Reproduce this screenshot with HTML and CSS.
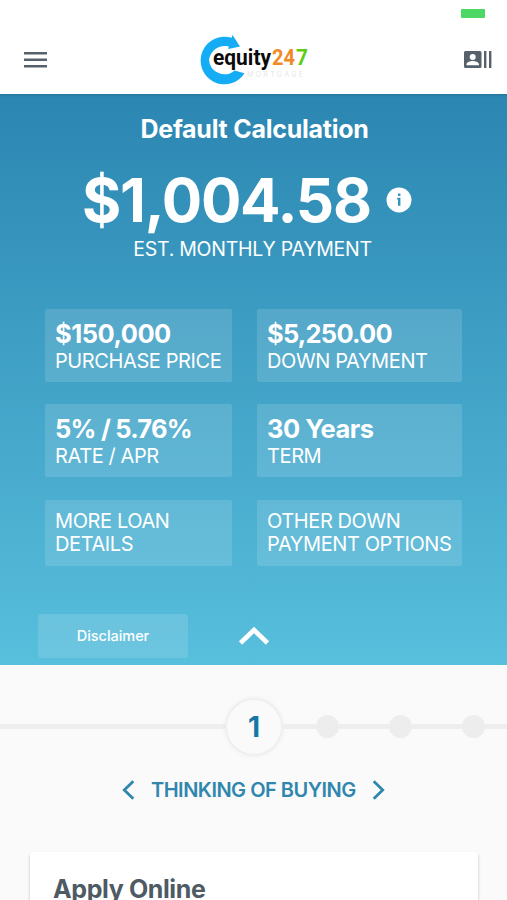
FILE: index.html
```html
<!DOCTYPE html>
<html lang="en">
<head>
    <meta charset="UTF-8">
    <meta name="viewport" content="width=device-width, initial-scale=1.0">
    <title>Equity247 Mortgage</title>
    <link rel="stylesheet" href="styles.css">
</head>
<body>
    <div class="status-bar">
        <span class="battery"></span>
    </div>
    <header class="header">
        <svg class="menu-icon" width="23" height="16" viewBox="0 0 23 16" fill="#56616b">
            <path d="M0 0h23v2.4H0zM0 6.5h23v2.4H0zM0 13h23v2.4H0z"/>
        </svg>
        <svg class="logo" width="110" height="52" viewBox="0 0 110 52">
            <path d="M32.500 1L40 12.500 28.500 15V12.300A16 16 0 0 0 9 26 15.500 15.500 0 0 0 34.500 36.500L44.500 39.300A23.800 23.800 0 1 1 31.500 3.800z" fill="#14adf5"/>
            <text class="logo-name" x="13" y="31" textLength="58" lengthAdjust="spacingAndGlyphs" fill="#0b0b0b">equity</text>
            <text class="logo-name" x="72" y="31" textLength="23" lengthAdjust="spacingAndGlyphs" fill="#f08a24">24</text>
            <text class="logo-name" x="96" y="31" textLength="12" lengthAdjust="spacingAndGlyphs" fill="#5fce12">7</text>
            <text class="logo-sub" x="47" y="43" textLength="56">MORTGAGE</text>
        </svg>
        <svg class="contact-icon" width="28" height="18" viewBox="0 0 28 18" fill="#56616b">
            <path fill-rule="evenodd" d="M1.500 0h14.500a1.500 1.500 0 0 1 1.500 1.500v14a1.500 1.500 0 0 1-1.500 1.500H1.500A1.500 1.500 0 0 1 0 15.500v-14A1.500 1.500 0 0 1 1.500 0zM8.700 3.100a3 3 0 1 0 0 6 3 3 0 0 0 0-6zM2.500 14.300h12.500v-1c0-2.100-4-3.300-6.250-3.300S2.500 11.200 2.500 13.300z"/>
            <path d="M20 0h2.400v17H20zM25 0h2.400v17H25z"/>
        </svg>
    </header>

    <section class="hero">
        <h1 class="title">Default Calculation</h1>
        <div class="amount-row">
            <span class="amount">$1,004.58</span>
            <svg class="info-icon" width="26" height="26" viewBox="0 0 26 26">
                <circle cx="13" cy="13" r="12.500" fill="#fff"/>
                <path d="M12 6.600h2.400v2.400H12zM11.200 10.800h3.200v8H12v-6.400h-.8z" fill="#3494bb"/>
            </svg>
        </div>
        <div class="amount-label">EST. MONTHLY PAYMENT</div>

        <div class="details">
            <div class="box">
                <div class="value">$150,000</div>
                <div class="label">PURCHASE PRICE</div>
            </div>
            <div class="box">
                <div class="value value-tight">$5,250.00</div>
                <div class="label">DOWN PAYMENT</div>
            </div>
            <div class="box">
                <div class="value value-tight">5% / 5.76%</div>
                <div class="label">RATE / APR</div>
            </div>
            <div class="box">
                <div class="value">30 Years</div>
                <div class="label">TERM</div>
            </div>
            <div class="box box-link">MORE LOAN<br>DETAILS</div>
            <div class="box box-link">OTHER DOWN<br>PAYMENT OPTIONS</div>
        </div>

        <div class="hero-footer">
            <button class="disclaimer">Disclaimer</button>
            <svg class="collapse-icon" width="32" height="20" viewBox="0 0 32 20">
                <path d="M2.500 17L16 4l13.500 13" fill="none" stroke="#fff" stroke-width="4.600"/>
            </svg>
        </div>
    </section>

    <div class="stepper">
        <span class="line line-left"></span>
        <span class="step-current">1</span>
        <span class="line line-first"></span>
        <span class="dot"></span>
        <span class="line line-mid"></span>
        <span class="dot"></span>
        <span class="line line-mid"></span>
        <span class="dot"></span>
        <span class="line"></span>
    </div>

    <nav class="stage">
        <svg width="13" height="20" viewBox="0 0 13 20">
            <path d="M11.300 1.300L2.300 10l9 8.700" fill="none" stroke="#2f87ae" stroke-width="2.800"/>
        </svg>
        <span class="stage-name">THINKING OF BUYING</span>
        <svg width="13" height="20" viewBox="0 0 13 20">
            <path d="M1.700 1.300l9 8.700-9 8.700" fill="none" stroke="#2f87ae" stroke-width="2.800"/>
        </svg>
    </nav>

    <div class="card">
        <h2 class="card-title">Apply Online</h2>
    </div>
</body>
</html>
```
FILE: styles.css
```css
* {
    box-sizing: border-box;
}
body {
    margin: 0;
    height: 900px;
    overflow: hidden;
    background-color: #fafafa;
    font-family: Inter, "Liberation Sans", sans-serif;
    color: #fff;
}
.status-bar {
    height: 26px;
    padding: 9px 22px 0 0;
    display: flex;
    justify-content: flex-end;
    background-color: #fff;
}
.battery {
    width: 24px;
    height: 8.5px;
    border-radius: 1px;
    background-color: #4bd864;
}
.header {
    height: 68px;
    display: flex;
    align-items: center;
    justify-content: space-between;
    padding: 0 15px 0 24px;
    background-color: #fff;
}
.logo {
    margin-right: 1px;
}
.logo-name {
    font-family: Roboto, sans-serif;
    font-weight: 700;
    font-size: 22px;
}
.logo-sub {
    font-family: Inter, sans-serif;
    font-size: 7px;
    fill: #e6e6e6;
}

/* Payment summary */
.hero {
    height: 571px;
    padding-top: 20px;
    background: linear-gradient(#2b86b1, #58bfdd);
    box-shadow: inset 0 5px 3px -4px rgba(0, 0, 0, 0.15);
}
.title {
    margin: 0;
    padding-left: 2px;
    height: 30px;
    line-height: 30px;
    font-size: 25px;
    font-weight: 650;
    letter-spacing: -0.25px;
    text-align: center;
}
.amount-row {
    display: flex;
    align-items: center;
    margin-top: 26px;
    height: 60px;
    padding-left: 82px;
}
.amount {
    width: 304px;
    font-size: 60px;
    line-height: 60px;
    font-weight: 700;
    letter-spacing: -1.25px;
    white-space: nowrap;
}
.amount-label {
    margin-top: 7px;
    padding-right: 2px;
    line-height: 24px;
    font-size: 19.5px;
    text-align: center;
    letter-spacing: -0.25px;
}
.details {
    display: grid;
    grid-template-columns: 187px 205px;
    grid-template-rows: 73px 73px 66px;
    gap: 22.5px 25px;
    margin: 47.5px 0 0 45px;
}
.box {
    padding: 11px 0 0 10px;
    border-radius: 2px;
    background-color: rgba(255, 255, 255, 0.13);
    white-space: nowrap;
}
.value {
    font-size: 25.5px;
    line-height: 28px;
    font-weight: 650;
    letter-spacing: -0.5px;
}
.value-tight {
    letter-spacing: -0.78px;
}
.label {
    margin-top: 1px;
    font-size: 20px;
    line-height: 24px;
    letter-spacing: -0.4px;
}
.box-link {
    padding-top: 10px;
    font-size: 20px;
    line-height: 23.5px;
    letter-spacing: -0.4px;
}
.hero-footer {
    display: flex;
    align-items: center;
    margin: 48.5px 0 0 38px;
}
.disclaimer {
    width: 150px;
    height: 44px;
    padding: 0 0 1px;
    border: none;
    border-radius: 3px;
    background-color: rgba(255, 255, 255, 0.13);
    color: #fff;
    font-family: inherit;
    font-size: 14.5px;
    font-weight: 500;
    letter-spacing: -0.05px;
}
.collapse-icon {
    margin-left: 50px;
}

/* Progress steps */
.stepper {
    display: flex;
    align-items: center;
    height: 60px;
    margin-top: 31.5px;
}
.line {
    flex: 1;
    height: 5px;
    background-color: #eee;
}
.line-left {
    flex: none;
    width: 225px;
}
.line-first {
    flex: none;
    width: 33px;
}
.line-mid {
    flex: none;
    width: 50px;
}
.step-current {
    display: flex;
    align-items: center;
    justify-content: center;
    width: 58px;
    height: 58px;
    border: 2px solid #efefef;
    border-radius: 50%;
    box-shadow: 0 0 5px rgba(0, 0, 0, 0.05);
    color: #1677a6;
    font-size: 28px;
    font-weight: 700;
}
.dot {
    width: 23px;
    height: 23px;
    border-radius: 50%;
    background-color: #ededed;
}
.stage {
    display: flex;
    align-items: center;
    justify-content: center;
    height: 30px;
    margin-top: 18.5px;
}
.stage-name {
    width: 205px;
    margin: 0 16px;
    color: #2f87ae;
    font-size: 20px;
    font-weight: 600;
    letter-spacing: -0.5px;
    white-space: nowrap;
}
.card {
    height: 48px;
    margin: 47px 29px 0 30px;
    padding: 22px 23px 0;
    border-radius: 3px 3px 0 0;
    background-color: #fff;
    box-shadow: 0 2px 3px rgba(0, 0, 0, 0.25);
}
.card-title {
    margin: 0;
    color: #4e5a64;
    font-size: 25px;
    line-height: 30px;
    font-weight: 650;
    letter-spacing: -0.38px;
}
```
